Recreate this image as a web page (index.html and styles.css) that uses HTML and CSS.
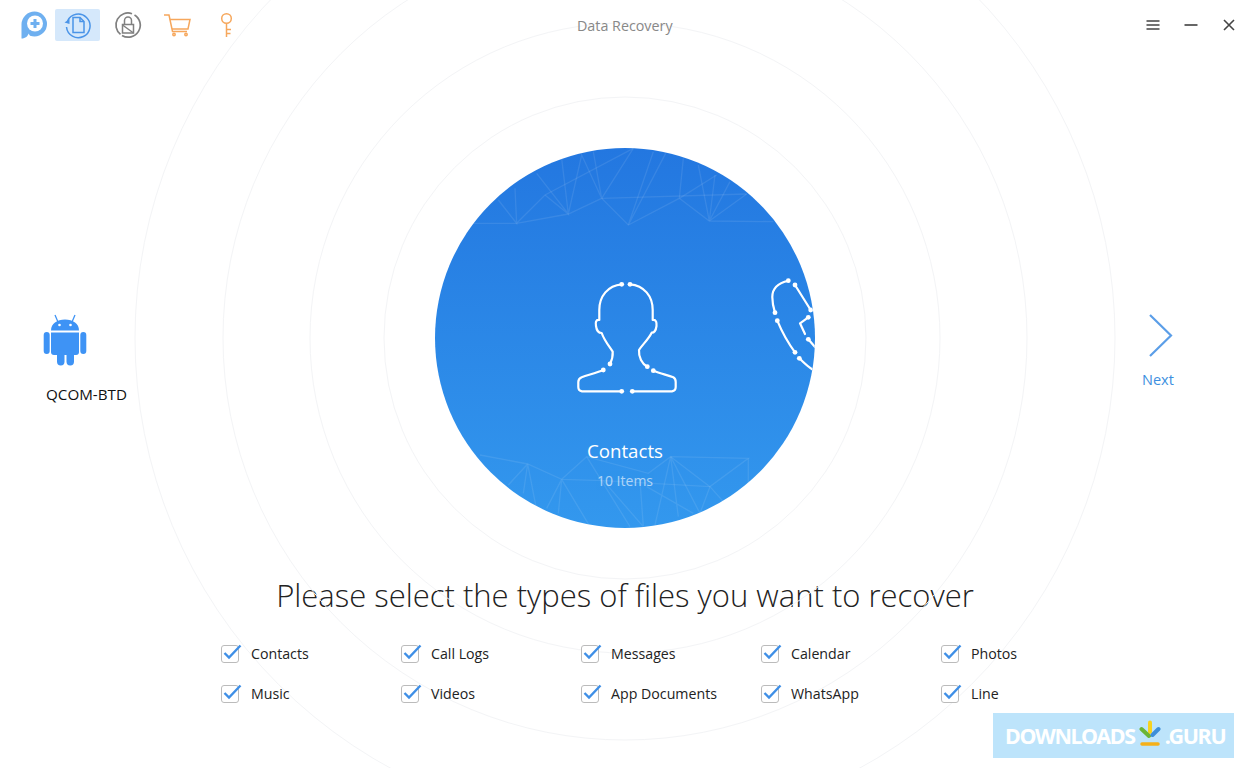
FILE: index.html
```html
<!DOCTYPE html>
<html>
	<head>
		<meta charset="utf-8">
		<title>Data Recovery</title>
		<link rel="stylesheet" href="styles.css">
	</head>
	<body>
		<div class="app">
			<svg class="rings" width="1244" height="768" viewBox="0 0 1244 768">
				<circle cx="625" cy="338" r="241"/>
				<circle cx="625" cy="338" r="315"/>
				<circle cx="625" cy="338" r="402"/>
				<circle cx="625" cy="338" r="490"/>
			</svg>

			<div class="topbar">
				<div class="tools">
					<svg class="logo" width="26" height="28" viewBox="0 0 26 28">
						<path fill="#6fb0f0" d="M13.500 0.500A12.500 12.500 0 0 1 13.500 25.500C12 25.500 10.500 25.300 9 24.700L7.500 22.500C7 25 4.500 27.500 0.500 27.500V13A13 13 0 0 1 13.500 0.500Z"/>
						<circle cx="14" cy="12.500" r="8" fill="#fff"/>
						<path fill="#6fb0f0" d="M12.500 8H15.500V11H18.500V14H15.500V17H12.500V14H9.500V11H12.500Z"/>
					</svg>
					<div class="tool tool-active">
						<svg width="28" height="28" viewBox="0 0 28 28" fill="none" stroke="#4a94e8" stroke-width="1.500">
							<path d="M3.500 10A11.800 11.800 0 1 1 2.500 16"/>
							<path fill="#4a94e8" stroke="none" d="M0.500 11.500L5.500 8V13Z"/>
							<path d="M9 6.500H16L20 10.500V21.500H9Z"/>
							<path d="M16 6.500V10.500H20"/>
						</svg>
					</div>
					<div class="tool">
						<svg width="28" height="28" viewBox="0 0 28 28" fill="none" stroke="#808080" stroke-width="1.500">
							<path stroke-width="1.700" d="M20.500 3.900A12 12 0 0 1 8 24.400M6.500 23.400A12 12 0 0 1 18 2.700"/>
							<path d="M8.500 13.500H19.500V22H8.500Z"/>
							<path d="M10.500 13.500V9.500A3.500 3.500 0 0 1 17.500 9.500V13.500"/>
							<path d="M8.500 14L19.500 22"/>
						</svg>
					</div>
					<div class="tool">
						<svg width="28" height="24" viewBox="0 0 28 24" fill="none" stroke="#f6a75c" stroke-width="1.500">
							<path d="M0 2H5L8.500 18.500H23"/>
							<path d="M5.800 6.500H26L24 16H8"/>
							<circle cx="10" cy="21.500" r="1.200"/>
							<circle cx="22" cy="21.500" r="1.200"/>
						</svg>
					</div>
					<div class="tool">
						<svg width="16" height="26" viewBox="0 0 16 26" fill="none" stroke="#f6a75c" stroke-width="1.500">
							<circle cx="6.500" cy="6.500" r="4.800"/>
							<path d="M6.500 11.500V25M6.500 17.500H11M6.500 21.500H10.500"/>
						</svg>
					</div>
				</div>
				<div class="title">Data Recovery</div>
				<div class="winctl">
					<svg width="14" height="12" viewBox="0 0 14 12" stroke="#444" stroke-width="1.500"><path d="M0.500 2H13.500M0.500 6H13.500M0.500 10H13.500"/></svg>
					<svg width="14" height="12" viewBox="0 0 14 12" stroke="#333" stroke-width="1.500"><path d="M0.500 6H13.500"/></svg>
					<svg width="14" height="12" viewBox="0 0 14 12" stroke="#444" stroke-width="1.600"><path d="M2 1L12 11M12 1L2 11"/></svg>
				</div>
			</div>

			<div class="stage">
				<div class="device">
					<svg width="46" height="52" viewBox="43 314 46 52" fill="#3e93f5">
						<path d="M51 330.500C51 323.500 57 319.500 65 319.500C73 319.500 79 323.500 79 330.500Z"/>
						<path stroke="#3e93f5" stroke-width="1.300" fill="none" d="M58 322L55 315M72 322L75 315"/>
						<circle cx="59.500" cy="325" r="1.300" fill="#fff"/>
						<circle cx="70.500" cy="325" r="1.300" fill="#fff"/>
						<path d="M51 332.500H79V352C79 354 78 355 76 355H54C52 355 51 354 51 352Z"/>
						<rect x="43.700" y="332" width="6" height="22" rx="3"/>
						<rect x="80.300" y="332" width="6" height="22" rx="3"/>
						<rect x="57" y="350" width="7.500" height="15.500" rx="3.700"/>
						<rect x="66.500" y="350" width="7.500" height="15.500" rx="3.700"/>
					</svg>
					<div class="device-name">QCOM-BTD</div>
				</div>

				<div class="disc">
					<svg class="disc-art" width="380" height="380" viewBox="0 0 380 380">
						<g class="mesh" transform="translate(-5 -3) scale(0.3333)">
							<path d="M130 235L260 235L415 207L515 160L595 240L748 160L838 228L1030 230"/>
							<path d="M515 160L950 147M260 235L345 150L610 10M205 165L260 235L255 130"/>
							<path d="M345 150L415 207L455 30L515 160L490 20M320 85L415 207L395 40M515 160L610 10"/>
							<path d="M595 240L670 20M595 240L707 25M748 160L760 40M748 160L860 90"/>
							<path d="M838 228L805 60M838 228L855 90M838 228L900 110M838 228L950 147"/>
						</g>
						<g class="mesh" transform="translate(-5 282) scale(0.3333)">
							<path d="M150 75L293 102L395 148L470 80L655 130L722 80L955 85L840 170L520 152L395 148"/>
							<path d="M722 80L840 170M955 85L955 170M293 102L235 165M293 102L280 190M293 102L320 240"/>
							<path d="M395 148L350 235M395 148L385 250M395 148L480 290M470 80L600 290M520 152L640 290M630 150L640 290"/>
							<path d="M722 80L675 285M722 80L745 260M722 80L810 250M840 170L810 250M840 170L880 215M650 170L790 250"/>
						</g>
						<g class="line" transform="translate(-435 -148)">
							<path d="M621.700 284.300C608 285.500 599.300 296 599.300 310V320C595.500 319.500 595.500 323 596 326C596.500 330 598.500 333 601.700 333C604 340 609 346 612.700 351.700C613 356 612 360 610 364"/>
							<path d="M603.300 370C596 373 588 375 581.700 377.300C579 378.500 578.300 380 578.300 382V387C578.300 390 580 391 582 391.300H621.700"/>
							<path d="M630 284.300C644 285.500 652.700 296 652.700 310V320C656.500 319.500 656.700 323 656.500 326C656 330 654.500 332.700 651.700 332.700C648 340 642 345 639 350C638.500 357 642 364 647.300 366.700"/>
							<path d="M653.300 370.700C660 373.500 667 375 673.300 377.300C675.500 378.500 675.700 380 675.700 382V387C675.700 390 674 391 672 391.300H632.300"/>
							<path d="M788.300 280.700C778 283 772.300 289 772.300 297C772.300 303 773.500 308 775 312.700"/>
							<path d="M777.300 320.700C782 332 788 343 795 352.300"/>
							<path d="M799.300 358.300C803 362 808 367 813.300 370"/>
							<path d="M795 285L810.700 310"/>
							<path d="M808.300 317.300L800 323.300L805 334"/>
							<path d="M808.300 339.300L815 347"/>
						</g>
						<g class="dots" transform="translate(-435 -148)">
							<circle cx="621.700" cy="284.300" r="2.400"/><circle cx="630" cy="284.300" r="2.400"/>
							<circle cx="610" cy="364" r="2.400"/><circle cx="647.300" cy="366.700" r="2.400"/>
							<circle cx="603.300" cy="370" r="2.400"/><circle cx="653.300" cy="370.700" r="2.400"/>
							<circle cx="621.700" cy="391.300" r="2.400"/><circle cx="632.300" cy="391.300" r="2.400"/>
							<circle cx="788.300" cy="280.700" r="2.400"/><circle cx="775" cy="312.700" r="2.400"/>
							<circle cx="777.300" cy="320.700" r="2.400"/><circle cx="795" cy="352.300" r="2.400"/>
							<circle cx="799.300" cy="358.300" r="2.400"/><circle cx="795" cy="285" r="2.400"/>
							<circle cx="810.700" cy="310" r="2.400"/><circle cx="808.300" cy="317.300" r="2.400"/>
							<circle cx="808.300" cy="339.300" r="2.400"/>
						</g>
					</svg>
					<div class="disc-name">Contacts</div>
					<div class="disc-count">10 Items</div>
				</div>

				<div class="next">
					<svg width="26" height="46" viewBox="0 0 26 46" fill="none" stroke="#5b9ee8" stroke-width="2.200"><path d="M2 3L23 23.500L2 44"/></svg>
					<div class="next-label">Next</div>
				</div>
			</div>

			<h1 class="heading">Please select the types of files you want to recover</h1>

			<div class="types">
				<label class="type"><svg width="21" height="19" viewBox="0 0 21 19"><rect class="box" x="0.500" y="1.500" width="17" height="17" rx="2.500"/><path class="tick" d="M3.500 9L8 13.500L19.500 1.500"/></svg>Contacts</label>
				<label class="type"><svg width="21" height="19" viewBox="0 0 21 19"><rect class="box" x="0.500" y="1.500" width="17" height="17" rx="2.500"/><path class="tick" d="M3.500 9L8 13.500L19.500 1.500"/></svg>Call Logs</label>
				<label class="type"><svg width="21" height="19" viewBox="0 0 21 19"><rect class="box" x="0.500" y="1.500" width="17" height="17" rx="2.500"/><path class="tick" d="M3.500 9L8 13.500L19.500 1.500"/></svg>Messages</label>
				<label class="type"><svg width="21" height="19" viewBox="0 0 21 19"><rect class="box" x="0.500" y="1.500" width="17" height="17" rx="2.500"/><path class="tick" d="M3.500 9L8 13.500L19.500 1.500"/></svg>Calendar</label>
				<label class="type"><svg width="21" height="19" viewBox="0 0 21 19"><rect class="box" x="0.500" y="1.500" width="17" height="17" rx="2.500"/><path class="tick" d="M3.500 9L8 13.500L19.500 1.500"/></svg>Photos</label>
				<label class="type"><svg width="21" height="19" viewBox="0 0 21 19"><rect class="box" x="0.500" y="1.500" width="17" height="17" rx="2.500"/><path class="tick" d="M3.500 9L8 13.500L19.500 1.500"/></svg>Music</label>
				<label class="type"><svg width="21" height="19" viewBox="0 0 21 19"><rect class="box" x="0.500" y="1.500" width="17" height="17" rx="2.500"/><path class="tick" d="M3.500 9L8 13.500L19.500 1.500"/></svg>Videos</label>
				<label class="type"><svg width="21" height="19" viewBox="0 0 21 19"><rect class="box" x="0.500" y="1.500" width="17" height="17" rx="2.500"/><path class="tick" d="M3.500 9L8 13.500L19.500 1.500"/></svg>App Documents</label>
				<label class="type"><svg width="21" height="19" viewBox="0 0 21 19"><rect class="box" x="0.500" y="1.500" width="17" height="17" rx="2.500"/><path class="tick" d="M3.500 9L8 13.500L19.500 1.500"/></svg>WhatsApp</label>
				<label class="type"><svg width="21" height="19" viewBox="0 0 21 19"><rect class="box" x="0.500" y="1.500" width="17" height="17" rx="2.500"/><path class="tick" d="M3.500 9L8 13.500L19.500 1.500"/></svg>Line</label>
			</div>

			<div class="watermark">
				<span>DOWNLOADS</span>
				<svg width="22" height="27" viewBox="0 0 22 27" fill="none" stroke-linecap="round">
					<path stroke="#f7d21e" stroke-width="4" d="M11 2.500V12"/>
					<path stroke="#6bb536" stroke-width="4" d="M2.500 9L10 16"/>
					<path stroke="#3e8fd8" stroke-width="4" d="M19.500 9L13.500 15"/>
					<path stroke="#f5b01a" stroke-width="3.500" d="M3 24H19"/>
				</svg>
				<span>.GURU</span>
			</div>
		</div>
	</body>
</html>
```

FILE: styles.css
```css
* {
  margin: 0;
  padding: 0;
  box-sizing: border-box;
}

body {
  background-color: #fff;
  font-family: "Open Sans", "Noto Sans", sans-serif;
  color: #222;
}

.app {
  position: relative;
  width: 1244px;
  height: 768px;
  overflow: hidden;
}

.rings {
  position: absolute;
  top: 0;
  left: 0;
  fill: none;
  stroke: #f3f4f6;
  stroke-width: 1;
}

.topbar {
  position: relative;
  display: grid;
  grid-template-columns: 577px 1fr auto;
  align-items: center;
  height: 50px;
}

.tools {
  display: flex;
  align-items: center;
  padding-left: 21px;
}

.logo {
  margin-right: 8px;
}

.tool {
  display: flex;
  justify-content: center;
  align-items: center;
  width: 45px;
  height: 32px;
  margin-right: 5px;
  border-radius: 2px;
}

.tool-active {
  background-color: #d5e8fb;
}

.title {
  font-size: 14.300px;
  color: #888;
}

.winctl {
  display: flex;
  align-items: center;
  gap: 24px;
  padding-right: 8px;
}

.stage {
  position: relative;
  display: grid;
  grid-template-columns: 435px 380px 1fr;
  align-items: center;
  margin-top: 98px;
  height: 380px;
}

.device {
  padding-left: 43px;
  margin-top: 42px;
}

.device svg {
  display: block;
}

.device-name {
  margin-top: 18px;
  margin-left: 3px;
  font-size: 15.200px;
  color: #111;
}

.disc {
  position: relative;
  width: 380px;
  height: 380px;
  border-radius: 50%;
  overflow: hidden;
  background: linear-gradient(#2377e0, #3398ee);
  text-align: center;
  color: #fff;
}

.disc-art {
  position: absolute;
  top: 0;
  left: 0;
  fill: none;
}

.mesh {
  stroke: #fff;
  stroke-opacity: 0.09;
  stroke-width: 4;
}

.line {
  stroke: #fff;
  stroke-width: 2.200;
  stroke-linecap: round;
  stroke-linejoin: round;
}

.dots circle {
  fill: #fff;
}

.disc-name {
  position: relative;
  margin-top: 289px;
  font-size: 18.700px;
  line-height: 28px;
}

.disc-count {
  position: relative;
  margin-top: 6px;
  font-size: 14px;
  line-height: 20px;
  opacity: 0.6;
}

.next {
  width: 40px;
  margin-left: 327px;
  margin-top: 24px;
  color: #3d8fe0;
}

.next svg {
  display: block;
  margin-left: 6px;
}

.next-label {
  margin-top: 12px;
  font-size: 14.500px;
}

.heading {
  margin-top: 45px;
  font-size: 31px;
  line-height: 44px;
  font-weight: 300;
  text-align: center;
  padding-left: 6px;
  color: #222;
}

.types {
  position: relative;
  display: grid;
  grid-template-columns: repeat(5, 180px);
  grid-auto-rows: 40px;
  margin-top: 16px;
  padding-left: 221px;
}

.type {
  display: flex;
  align-items: center;
  gap: 9px;
  height: 40px;
  font-size: 14.200px;
  color: #222;
}

.box {
  fill: #fff;
  stroke: #bbb;
}

.tick {
  fill: none;
  stroke: #3f8fe6;
  stroke-width: 2.400;
}

.watermark {
  position: absolute;
  left: 993px;
  top: 713px;
  display: flex;
  align-items: center;
  gap: 4px;
  width: 241px;
  height: 45px;
  padding-left: 12px;
  background-color: #bde4fb;
  color: #fff;
  font-family: "Noto Sans", sans-serif;
  font-size: 21.500px;
  font-weight: 700;
  letter-spacing: -1.300px;
}

.watermark svg {
  flex-shrink: 0;
  margin-top: -4px;
}
```
